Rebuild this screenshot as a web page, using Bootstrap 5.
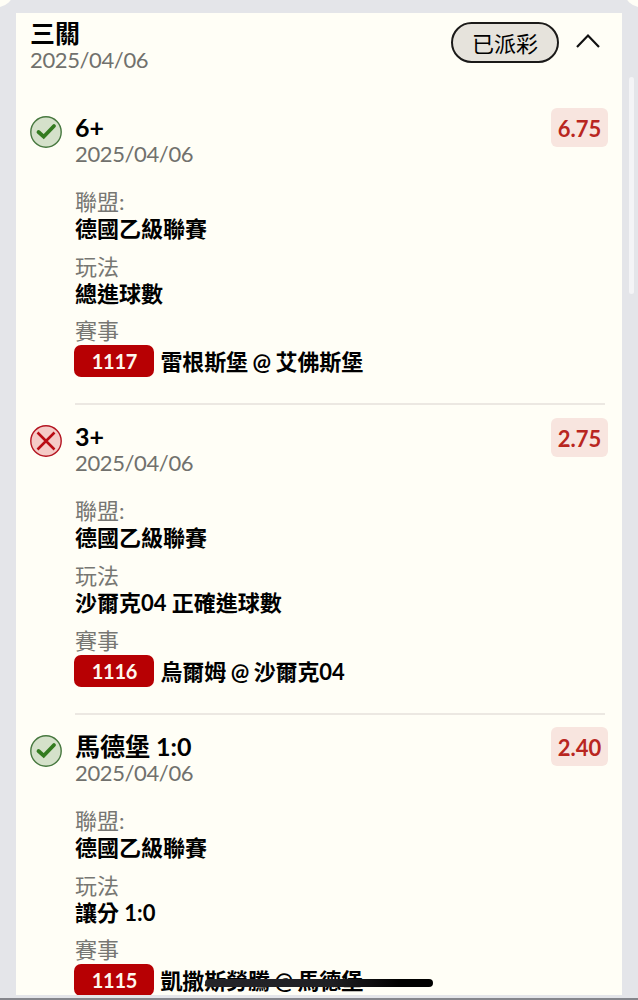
<!DOCTYPE html>
<html lang="zh-Hant">
<head>
<meta charset="utf-8">
<meta name="viewport" content="width=device-width, initial-scale=1">
<title>三關</title>
<link href="https://cdn.jsdelivr.net/npm/bootstrap@5.3.0/dist/css/bootstrap.min.css" rel="stylesheet">
<style>
body{background:#fffef6;font-family:Lato,"Noto Sans CJK TC",sans-serif;color:#000;height:1000px;font-size:22px}
.shell{height:998px;background:#e4e5e9;padding:13px 16px 3px}
.screen{height:1000px;border-bottom:2px solid #85868c}
.sheet{background:#fffef6;height:982px}
.corner{width:30px;height:30px;top:-23px;border-radius:50%;background:#fffef6}
.slip-head{height:81.5px;padding:7px 20px 0 14px}
.ttl{font-size:25px;line-height:28px;font-weight:700}
.slip-head .ttl{line-height:27px}
.sub{color:#71716d;line-height:25px;letter-spacing:-.38px}
.status{width:108px;height:41px;border:2px solid #1b1a19;background:#e6e3dc;line-height:39px;margin-top:2px}
.caret{width:28px;height:20px;margin:12px 0 0 15px}
.leg{padding:19px 14px 0 14px;height:309.5px}
.leg-main{margin-left:13px}
.leg-main .ttl{line-height:27px}
.leg-icon{width:32px;height:32px;margin-top:2px}
.lbl{color:#777773;line-height:27px}
.val{line-height:27px;font-weight:700}
.odds{width:57px;height:39px;line-height:41px;background:#f8e5df;color:#b9261f;border-radius:6px;margin-top:-5.5px}
.code{width:80px;height:32px;line-height:33px;background:#b70003;border-radius:7px;font-size:20px;color:#fff8ed;margin:0 6px 0 -.6px;letter-spacing:-.3px}
.versus{letter-spacing:-.1px;word-spacing:-.7px;padding-top:1px}
.rule{height:2px;background:#ece8e2;margin:-1px 17px 0 59px}
.leg-next{margin-top:-1px}
.gap-a{margin-top:22px}.gap-b{margin-top:11px}.gap-c{margin-top:10.5px}
.match-row{margin-top:1px}
.thumb{right:4px;top:77px;width:5px;height:217px;background:#f4f4f6}
.home-bar{left:205px;top:979px;width:228px;height:8px;background:linear-gradient(90deg,#252529,#202024 55%,#000 85%)}
</style>
</head>
<body class="overflow-hidden">
<div class="screen position-relative overflow-hidden">
<div class="shell">
<main class="sheet overflow-hidden">
  <header class="slip-head d-flex justify-content-between align-items-start">
    <div><div class="ttl">三關</div><div class="sub">2025/04/06</div></div>
    <div class="d-flex align-items-start">
      <div class="status rounded-pill text-center">已派彩</div>
      <svg class="caret" viewBox="0 0 28 20" fill="none" stroke="#111" stroke-width="2.2"><path d="M3 15 14 3.5 25 15"/></svg>
    </div>
  </header>

  <section class="leg d-flex align-items-start">
    <svg class="leg-icon flex-shrink-0" viewBox="0 0 32 32"><circle cx="16" cy="16" r="15.2" fill="#d5e1ca" stroke="#47783f" stroke-width="1.4"/><path d="M8.5 16 13.7 20.7 24 10" fill="none" stroke="#347b20" stroke-width="3.8" stroke-linecap="round"/></svg>
    <div class="leg-main flex-grow-1">
      <div class="ttl">6+</div><div class="sub">2025/04/06</div>
      <div class="lbl gap-a">聯盟:</div><div class="val">德國乙級聯賽</div>
      <div class="lbl gap-b">玩法</div><div class="val">總進球數</div>
      <div class="lbl gap-c">賽事</div>
      <div class="match-row d-flex align-items-center"><span class="code text-center fw-bold">1117</span><span class="val versus">雷根斯堡 @ 艾佛斯堡</span></div>
    </div>
    <div class="odds fw-bold text-center">6.75</div>
  </section>
  <div class="rule"></div>

  <section class="leg leg-next d-flex align-items-start">
    <svg class="leg-icon flex-shrink-0" viewBox="0 0 32 32"><circle cx="16" cy="16" r="15.2" fill="#f5cbc7" stroke="#b41521" stroke-width="1.4"/><path d="M7.5 7.5 24.5 24.5M24.5 7.5 7.5 24.5" fill="none" stroke="#b90c14" stroke-width="2.5"/></svg>
    <div class="leg-main flex-grow-1">
      <div class="ttl">3+</div><div class="sub">2025/04/06</div>
      <div class="lbl gap-a">聯盟:</div><div class="val">德國乙級聯賽</div>
      <div class="lbl gap-b">玩法</div><div class="val">沙爾克04 正確進球數</div>
      <div class="lbl gap-c">賽事</div>
      <div class="match-row d-flex align-items-center"><span class="code text-center fw-bold">1116</span><span class="val versus">烏爾姆 @ 沙爾克04</span></div>
    </div>
    <div class="odds fw-bold text-center">2.75</div>
  </section>
  <div class="rule"></div>

  <section class="leg leg-next d-flex align-items-start">
    <svg class="leg-icon flex-shrink-0" viewBox="0 0 32 32"><circle cx="16" cy="16" r="15.2" fill="#d5e1ca" stroke="#47783f" stroke-width="1.4"/><path d="M8.5 16 13.7 20.7 24 10" fill="none" stroke="#347b20" stroke-width="3.8" stroke-linecap="round"/></svg>
    <div class="leg-main flex-grow-1">
      <div class="ttl">馬德堡 1:0</div><div class="sub">2025/04/06</div>
      <div class="lbl gap-a">聯盟:</div><div class="val">德國乙級聯賽</div>
      <div class="lbl gap-b">玩法</div><div class="val">讓分 1:0</div>
      <div class="lbl gap-c">賽事</div>
      <div class="match-row d-flex align-items-center"><span class="code text-center fw-bold">1115</span><span class="val versus">凱撒斯勞騰 @ 馬德堡</span></div>
    </div>
    <div class="odds fw-bold text-center">2.40</div>
  </section>
</main>
</div>
<div class="corner position-absolute" style="left:-17px"></div>
<div class="corner position-absolute" style="right:-17px"></div>
<div class="thumb position-absolute rounded-pill"></div>
<div class="home-bar position-absolute rounded-pill"></div>
</div>
<script src="https://cdn.jsdelivr.net/npm/bootstrap@5.3.0/dist/js/bootstrap.bundle.min.js"></script>
</body>
</html>
